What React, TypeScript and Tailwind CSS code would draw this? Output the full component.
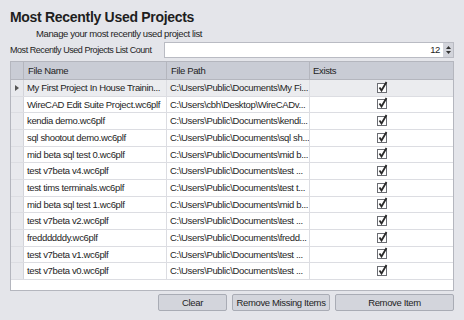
import React from 'react'

const rows = [
  ['My First Project In House Trainin...', 'C:\\Users\\Public\\Documents\\My Fi...'],
  ['WireCAD Edit Suite Project.wc6plf', 'C:\\Users\\cbh\\Desktop\\WireCADv...'],
  ['kendia demo.wc6plf', 'C:\\Users\\Public\\Documents\\kendi...'],
  ['sql shootout demo.wc6plf', 'C:\\Users\\Public\\Documents\\sql sh...'],
  ['mid beta sql test 0.wc6plf', 'C:\\Users\\Public\\Documents\\mid b...'],
  ['test v7beta v4.wc6plf', 'C:\\Users\\Public\\Documents\\test ...'],
  ['test tims terminals.wc6plf', 'C:\\Users\\Public\\Documents\\test t...'],
  ['mid beta sql test 1.wc6plf', 'C:\\Users\\Public\\Documents\\mid b...'],
  ['test v7beta v2.wc6plf', 'C:\\Users\\Public\\Documents\\test ...'],
  ['freddddddy.wc6plf', 'C:\\Users\\Public\\Documents\\fredd...'],
  ['test v7beta v1.wc6plf', 'C:\\Users\\Public\\Documents\\test ...'],
  ['test v7beta v0.wc6plf', 'C:\\Users\\Public\\Documents\\test ...'],
]

function Check() {
  return (
    <svg width="11" height="12" viewBox="0 0 11 12">
      <rect x="0.5" y="2.5" width="9" height="9" fill="#fff" stroke="#6b6d73" />
      <path d="M2.5 6.5 L4.5 9.5 L9.5 1" fill="none" stroke="#2a2a2a" strokeWidth="1.8" />
    </svg>
  )
}

export default function App() {
  return (
    <div className="w-[464px] h-[320px] bg-[#e4e5ea] text-[#1e1e1e] overflow-hidden px-[10px] pt-[7px] font-['Liberation_Sans',Tahoma,sans-serif] text-[9.5px] tracking-[-0.35px] leading-none whitespace-nowrap">
      <div className="text-[14px] font-bold tracking-[-0.3px] h-[20px] flex items-center">Most Recently Used Projects</div>
      <div className="pl-[26px] h-[14px] flex items-center tracking-[-0.4px]">Manage your most recently used project list</div>
      <div className="flex items-center h-[16px] mt-[1px]">
        <div className="w-[154px] text-[9px] tracking-[-0.45px]">Most Recently Used Projects List Count</div>
        <div className="flex-1 h-[16px] flex border border-[#b9bbc3] bg-white">
          <div className="flex-1 flex items-center justify-end pr-[3px]">12</div>
          <div className="w-[10px] bg-[#d2d4db] flex flex-col items-center justify-center gap-[2px]">
            <svg width="5" height="3" viewBox="0 0 5 3"><path d="M0 3 L2.5 0 L5 3 Z" fill="#333" /></svg>
            <svg width="5" height="3" viewBox="0 0 5 3"><path d="M0 0 L2.5 3 L5 0 Z" fill="#333" /></svg>
          </div>
        </div>
      </div>
      <div className="mt-[3px] h-[230px] border border-[#b4b6be] bg-white flex flex-col">
        <div className="flex h-[18px] bg-[#c9ccd5] border-b border-[#b4b6be]">
          <div className="w-[13px] border-r border-[#b4b6be]" />
          <div className="w-[143px] border-r border-[#b4b6be] flex items-center pl-[4px]">File Name</div>
          <div className="w-[143px] border-r border-[#b4b6be] flex items-center pl-[4px]">File Path</div>
          <div className="flex-1 flex items-center pl-[3px]">Exists</div>
        </div>
        {rows.map((r, i) => (
          <div key={i} className={`flex h-[16.67px] border-b border-[#dcdde2] ${i === 0 ? 'bg-[#ebecef]' : 'bg-white'}`}>
            <div className="w-[13px] bg-[#e8e9ed] border-r border-[#d3d4da] flex items-center justify-center">
              {i === 0 && <svg width="4" height="6" viewBox="0 0 4 6"><path d="M0 0 L4 3 L0 6 Z" fill="#555" /></svg>}
            </div>
            <div className="w-[143px] border-r border-[#dcdde2] flex items-center pl-[3px] overflow-hidden">{r[0]}</div>
            <div className="w-[143px] border-r border-[#dcdde2] flex items-center pl-[3px] overflow-hidden">{r[1]}</div>
            <div className="flex-1 flex items-center justify-center pl-[2px] pb-[2px]"><Check /></div>
          </div>
        ))}
      </div>
      <div className="flex justify-end gap-[5px] mt-[3px]">
        {[['Clear', 'w-[69px]'], ['Remove Missing Items', 'w-[98px]'], ['Remove Item', 'w-[119px]']].map(([t, w]) => (
          <div key={t} className={`${w} h-[17px] flex items-center justify-center bg-[#d3d5dc] border border-[#a9acb5] rounded-[2px]`}>{t}</div>
        ))}
      </div>
    </div>
  )
}
